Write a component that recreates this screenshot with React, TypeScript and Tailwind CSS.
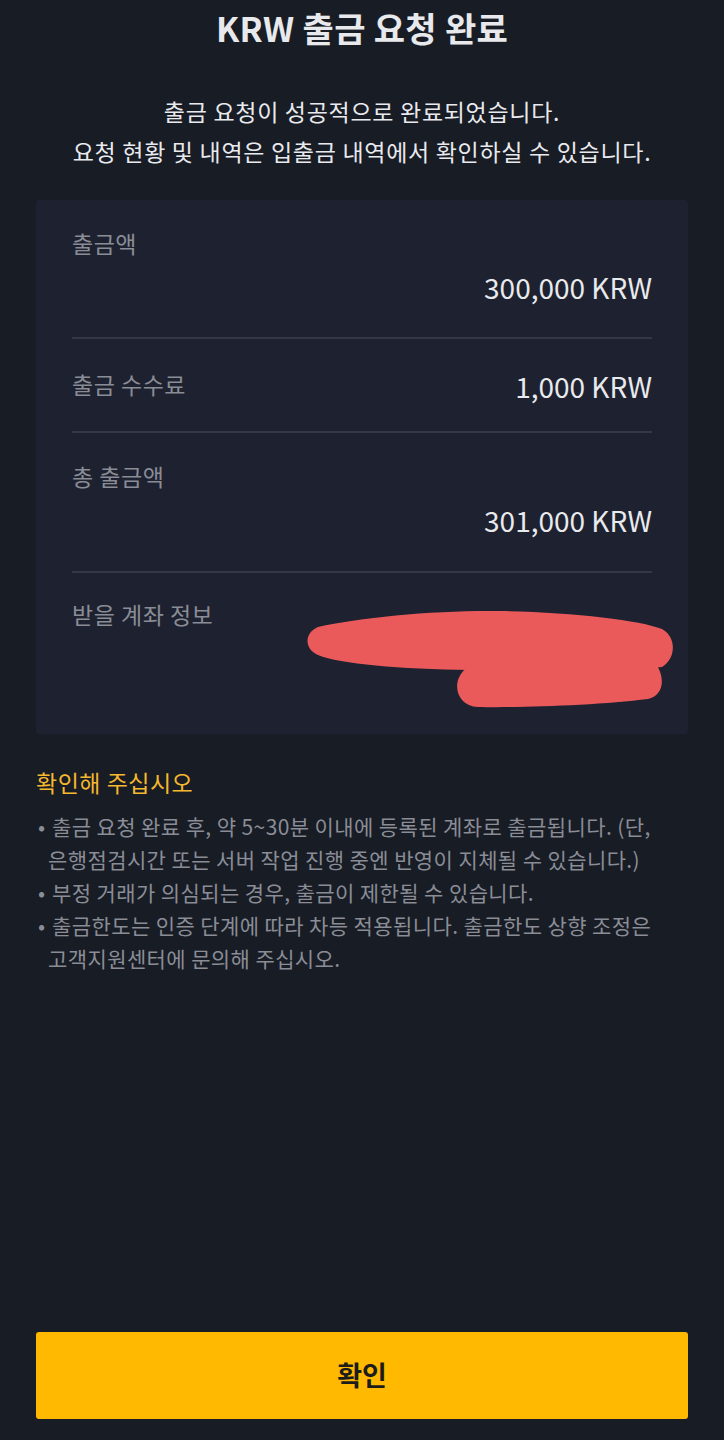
const font = { fontFamily: '"Noto Sans CJK KR", "Noto Sans", sans-serif' };

const notes = [
  ["출금 요청 완료 후, 약 5~30분 이내에 등록된 계좌로 출금됩니다. (단,", "은행점검시간 또는 서버 작업 진행 중엔 반영이 지체될 수 있습니다.)"],
  ["부정 거래가 의심되는 경우, 출금이 제한될 수 있습니다."],
  ["출금한도는 인증 단계에 따라 차등 적용됩니다. 출금한도 상향 조정은", "고객지원센터에 문의해 주십시오."],
];

const Divider = () => <div className="h-[2px] bg-[#343845]" />;

const Redaction = () => (
  <svg
    className="absolute left-[228px] top-[26px]"
    width="380"
    height="115"
    viewBox="300 600 380 115"
    fill="#eb5a5a">
    {/* scribbled-out account number */}
    <path d="M318 628 C360 618 440 611 500 612 C570 613 640 621 662 630 C677 638 676 660 662 668 C600 674 520 672 470 671 C400 670 340 665 318 656 C304 650 304 634 318 628 Z" />
    <path d="M468 668 C540 668 620 666 658 668 C666 684 661 697 648 700 C600 706 520 709 478 708 C455 707 450 680 468 668 Z" />
  </svg>
);

export default function App() {
  return (
    <div className="h-[1440px] flex flex-col bg-[#181c25] text-[#e9eaee]" style={font}>
      <h1 className="h-14 leading-[56px] text-center text-[34px] font-bold tracking-[0.3px] text-[#e8e9ec]">
        KRW 출금 요청 완료
      </h1>

      <div className="mt-[35px] text-center text-[23px] leading-[40px] tracking-[0.7px]">
        <p>출금 요청이 성공적으로 완료되었습니다.</p>
        <p>요청 현황 및 내역은 입출금 내역에서 확인하실 수 있습니다.</p>
      </div>

      <div className="mx-9 mt-[29px] rounded-sm bg-[#1e2230] px-9">
        <div className="pt-[27px] pb-[34px]">
          <p className="text-[23px] leading-8 tracking-[0.5px] text-[#8a8d96]">출금액</p>
          <p className="mt-[12px] text-right text-[28px] leading-8">300,000 KRW</p>
        </div>
        <Divider />
        <div className="flex items-center justify-between pt-[27px] pb-[29px]">
          <p className="text-[23px] leading-8 tracking-[0.5px] text-[#8a8d96]">출금 수수료</p>
          <p className="mt-1 text-[28px] leading-8">1,000 KRW</p>
        </div>
        <Divider />
        <div className="pt-[27px] pb-[35px]">
          <p className="text-[23px] leading-8 tracking-[0.5px] text-[#8a8d96]">총 출금액</p>
          <p className="mt-3 text-right text-[28px] leading-8">301,000 KRW</p>
        </div>
        <Divider />
        <div className="relative h-[161px] pt-[25px]">
          <p className="text-[23px] leading-8 tracking-[0.5px] text-[#8a8d96]">받을 계좌 정보</p>
          <Redaction />
        </div>
      </div>

      <div className="mx-9 mt-[32px]">
        <p className="text-[23px] leading-8 tracking-[0.5px] text-[#f5b82e]">확인해 주십시오</p>
        <div className="mt-[12px] text-[21px] leading-[33px] tracking-[0.4px] text-[#8a8d96]">
          {notes.map((lines, i) => (
            <div key={i} className="flex">
              <span className="w-3 shrink-0 pl-0.5">•</span>
              <p className="whitespace-nowrap">
                {lines.map((line, j) => (
                  <span key={j} className={j === 0 ? "block pl-1" : "block"}>
                    {line}
                  </span>
                ))}
              </p>
            </div>
          ))}
        </div>
      </div>

      <button className="mx-9 mt-auto mb-[21px] h-[87px] rounded-[3px] bg-[#ffb900] text-[27px] font-bold text-[#1c1c1c]">
        확인
      </button>
    </div>
  );
}
